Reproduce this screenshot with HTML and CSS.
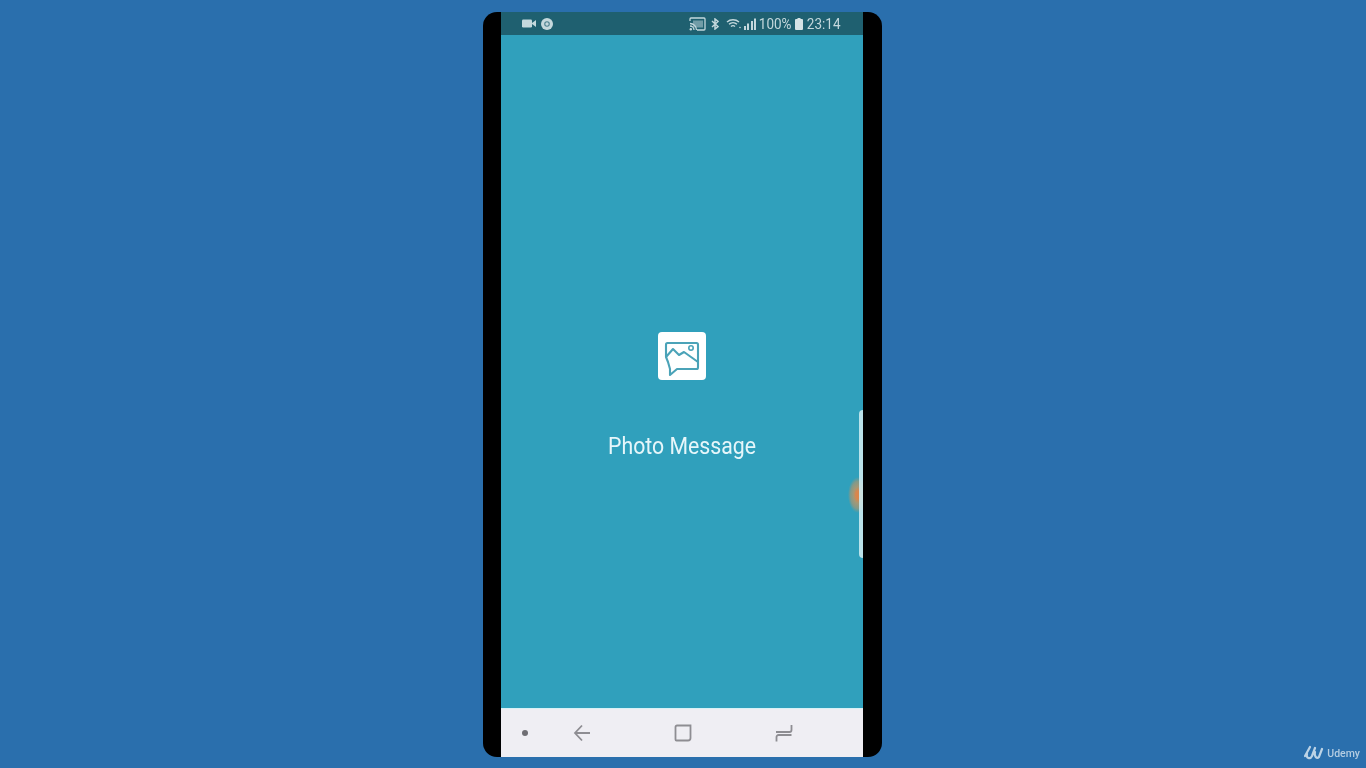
FILE: index.html
```html
<!DOCTYPE html>
<html>
<head>
  <title>Photo Message</title>
  <link rel="stylesheet" href="styles.css">
</head>
<body>
  <div class="phone">
    <div class="screen">
      <div class="status-bar">
        <div class="status-left">
          <svg class="icon-video" viewBox="0 0 14 9"><rect x="0" y="0.5" width="10" height="8" rx="1.2" fill="#c4d8dd"/><path d="M10 4l4-3v7l-4-3z" fill="#c4d8dd"/></svg>
          <svg class="icon-chrome" viewBox="0 0 12 12"><circle cx="6" cy="6" r="6" fill="#c4d8dd"/><circle cx="6" cy="6" r="2.8" fill="#4d8290"/><circle cx="6" cy="6" r="1.700" fill="#c4d8dd"/></svg>
        </div>
        <div class="status-right">
          <svg class="icon-cast" viewBox="0 0 17 14"><path d="M1 4V2a1 1 0 0 1 1-1h13a1 1 0 0 1 1 1v10a1 1 0 0 1-1 1H8" fill="none" stroke="#c4d8dd" stroke-width="1.300"/><path d="M1 6.500a6.500 6.500 0 0 1 6.500 6.500M1 9a4 4 0 0 1 4 4" fill="none" stroke="#c4d8dd" stroke-width="1.300"/><circle cx="1.800" cy="12.200" r="1.200" fill="#c4d8dd"/><rect x="4" y="3.500" width="10" height="7" fill="#c4d8dd" opacity="0.5"/></svg>
          <svg class="icon-bt" viewBox="0 0 8 12"><path d="M1 3l6 5.500L4 11V1l3 2.500L1 9" fill="none" stroke="#c4d8dd" stroke-width="1.500"/></svg>
          <svg class="icon-wifi" viewBox="0 0 15 11"><path d="M1 4a9 9 0 0 1 12 0M3 6.300a6 6 0 0 1 8 0M5 8.500a3 3 0 0 1 4 0" fill="none" stroke="#c4d8dd" stroke-width="1.400"/><circle cx="14" cy="9.500" r="0.800" fill="#c4d8dd"/></svg>
          <svg class="icon-signal" viewBox="0 0 12 12"><rect x="0" y="8" width="2" height="4" fill="#c4d8dd"/><rect x="3" y="5.500" width="2" height="6.500" fill="#c4d8dd"/><rect x="7" y="3" width="2" height="9" fill="#c4d8dd"/><rect x="10" y="0.500" width="2" height="11.500" fill="#c4d8dd"/></svg>
          <span class="status-text">100%</span>
          <svg class="icon-battery" viewBox="0 0 8 12"><path d="M2.500 0h3v1H7a1 1 0 0 1 1 1v9a1 1 0 0 1-1 1H1a1 1 0 0 1-1-1V2a1 1 0 0 1 1-1h1.500z" fill="#d5e3e6"/></svg>
          <span class="status-text">23:14</span>
        </div>
      </div>

      <div class="splash">
        <div class="app-icon">
          <svg viewBox="0 0 48 48" width="48" height="48">
            <path d="M9.500 11h29a1.500 1.500 0 0 1 1.500 1.500v23a1.500 1.500 0 0 1-1.500 1.500H19l-7 6v-6l-2-7-2-5V12.500A1.500 1.500 0 0 1 9.500 11z" fill="none" stroke="#4ba3b8" stroke-width="2.100" stroke-linejoin="round"/>
            <path d="M8 25l7-8 6 6 5-3 14 10" fill="none" stroke="#4ba3b8" stroke-width="2.100" stroke-linejoin="round"/>
            <circle cx="33" cy="16" r="2.200" fill="none" stroke="#4ba3b8" stroke-width="1.600"/>
          </svg>
        </div>
        <div class="app-name">Photo Message</div>
      </div>

      <div class="touch-dot"></div>
      <div class="edge-handle"></div>

      <div class="nav-bar">
        <span class="nav-dot"></span>
        <svg class="nav-icon" viewBox="0 0 18 18"><path d="M17 9H2.500M9 1.500L2 9l7 7.500" fill="none" stroke="#8e8d92" stroke-width="1.800"/></svg>
        <svg class="nav-icon" viewBox="0 0 18 18"><path d="M3 1.500h13.500V14a2.500 2.500 0 0 1-2.500 2.500H2.500a1 1 0 0 1-1-1V3A1.500 1.500 0 0 1 3 1.500z" fill="none" stroke="#8e8d92" stroke-width="1.800"/></svg>
        <svg class="nav-icon" viewBox="0 0 18 18"><path d="M1 8h13.500A2 2 0 0 0 16.500 6V1M16.500 11H3.500a2 2 0 0 0-2 2v4.500" fill="none" stroke="#8e8d92" stroke-width="1.800"/></svg>
      </div>
    </div>
  </div>

  <div class="watermark">
    <svg viewBox="0 0 20 16" width="20" height="16"><path d="M1 11l5-9M3 9c-1 4 3 6 5 2l3-8M11 7c-1 5 2 7 4 5l3-8" fill="none" stroke="#bcd3e6" stroke-width="2.200" stroke-linecap="round"/></svg>
    <span>Udemy</span>
  </div>
</body>
</html>
```

FILE: styles.css
```css
html, body {
  height: 100%;
}

body {
  margin: 0;
  background-color: #2a6fad;
  font-family: Roboto, sans-serif;
  overflow: hidden;
}

.phone {
  width: 399px;
  height: 745px;
  margin: 12px 0 0 483px;
  padding: 0 19px 0 18px;
  box-sizing: border-box;
  background-color: #000;
  border-radius: 14px;
}

.screen {
  position: relative;
  display: flex;
  flex-direction: column;
  height: 100%;
  background-color: #30a0bc;
  overflow: hidden;
}

.status-bar {
  display: flex;
  align-items: center;
  justify-content: space-between;
  height: 23px;
  padding: 0 23px 0 21px;
  background-color: #1f6070;
  color: #c4d8dd;
}

.status-left, .status-right {
  display: flex;
  align-items: center;
  filter: blur(0.4px);
}

.status-left {
  gap: 5px;
}

.status-right {
  gap: 3px;
}

.status-text {
  margin: 0 -2px;
  font-size: 15px;
  transform: scaleX(0.9);
}

.icon-video {
  width: 14px;
  height: 9px;
}

.icon-chrome {
  width: 12px;
  height: 12px;
}

.icon-cast {
  width: 17px;
  height: 14px;
}

.icon-bt {
  width: 8px;
  height: 12px;
  margin: 0 2px;
}

.icon-wifi {
  width: 15px;
  height: 11px;
  margin-left: 2px;
}

.icon-signal {
  width: 12px;
  height: 12px;
}

.icon-battery {
  width: 8px;
  height: 12px;
  margin-right: 1px;
}

.splash {
  flex: 1;
  display: flex;
  flex-direction: column;
  align-items: center;
  padding-top: 297px;
}

.app-icon {
  display: flex;
  width: 48px;
  height: 48px;
  background-color: #fff;
  border-radius: 4px;
}

.app-icon svg {
  filter: blur(0.4px);
}

.app-name {
  margin-top: 53px;
  color: #e6f6fa;
  font-size: 23px;
  line-height: 28px;
  white-space: nowrap;
  transform: scaleX(0.925);
  filter: blur(0.3px);
}

.edge-handle {
  position: absolute;
  top: 398px;
  right: 0;
  width: 4.5px;
  height: 148px;
  background-color: #cdeaf0;
  border-radius: 4px 0 0 4px;
  opacity: 0.88;
}

.touch-dot {
  position: absolute;
  top: 465px;
  right: -5px;
  width: 20px;
  height: 36px;
  background: radial-gradient(closest-side, #d9864c 0, #d9864c 22%, rgba(185, 150, 105, 0.85) 45%, rgba(175, 150, 110, 0.65) 75%, rgba(175, 150, 110, 0) 100%);
}

.nav-bar {
  display: flex;
  align-items: center;
  height: 49px;
  padding-left: 21px;
  background-color: #efeef3;
  border-top: 1px solid #d8f1f6;
  box-sizing: border-box;
}

.nav-dot {
  flex-shrink: 0;
  width: 6px;
  height: 6px;
  border-radius: 50%;
  background-color: #6f6e73;
  margin-right: 45px;
}

.nav-icon {
  flex-shrink: 0;
  width: 18px;
  height: 18px;
  margin-right: 83px;
  filter: blur(0.4px);
}

.nav-icon:last-child {
  margin-right: 0;
}

.watermark {
  position: absolute;
  right: 6px;
  bottom: 7px;
  display: flex;
  align-items: center;
  gap: 3px;
  color: #b4cde2;
  font-size: 10.5px;
  font-weight: 500;
  filter: blur(0.4px);
}
```
